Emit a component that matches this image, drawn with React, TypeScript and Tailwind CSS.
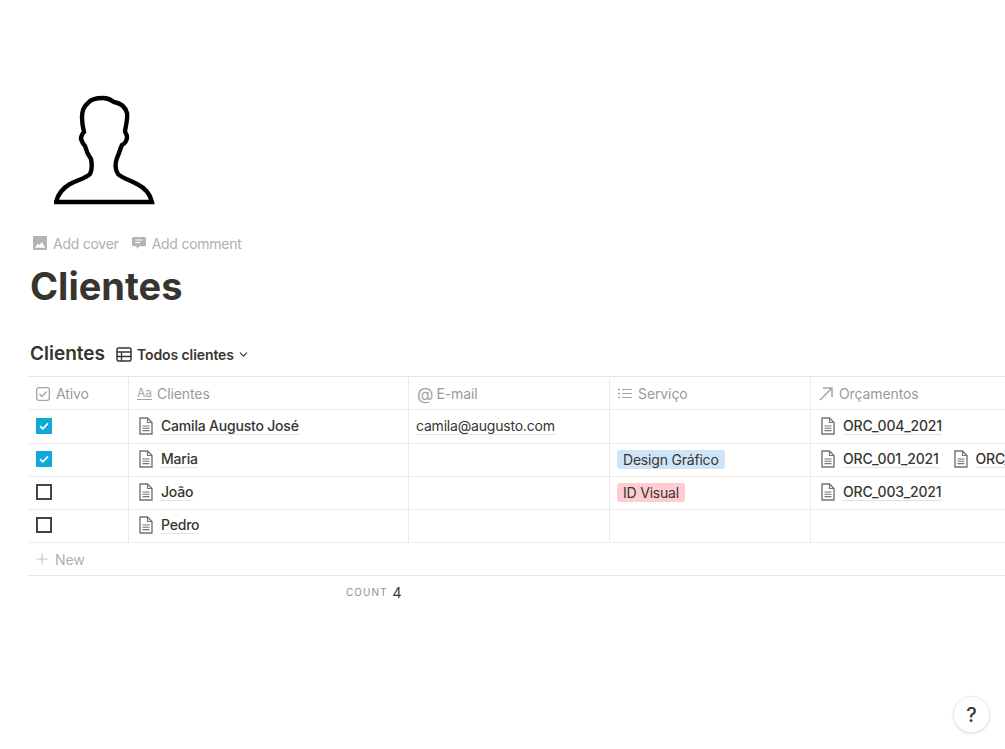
import { ChevronDown, Plus } from "lucide-react";

const font = { fontFamily: "Inter, 'Noto Sans', sans-serif" };

function DocIcon() {
  return (
    <svg width="14" height="18" viewBox="0 0 14 18" fill="none" className="shrink-0">
      <path d="M1 1h7.5L13 5.5V17H1z" stroke="#76756f" strokeWidth="1.400" />
      <path d="M8.500 1v4.500H13" stroke="#76756f" strokeWidth="1.200" />
      <path d="M3.500 9h7M3.500 11.300h7M3.500 13.600h7" stroke="#76756f" strokeWidth="1.100" />
    </svg>
  );
}

function Check({ on }: { on: boolean }) {
  if (on) {
    return (
      <div className="w-4 h-4 bg-[#0fa9d8] flex items-center justify-center">
        <svg width="12" height="12" viewBox="0 0 12 12" fill="none">
          <path d="M2 6.200l2.800 2.600L10 3.400" stroke="#fff" strokeWidth="1.700" />
        </svg>
      </div>
    );
  }
  return <div className="w-4 h-4 border-2 border-[#45443f]" />;
}

function PageLink({ text }: { text: string }) {
  return (
    <div className="flex items-center gap-[8px] shrink-0">
      <DocIcon />
      <span className="text-[14px] tracking-[-0.2px] font-medium text-[#37352f] border-b border-[#e4e3e1] leading-[17px]">{text}</span>
    </div>
  );
}

function Head({ w, icon, label, last }: { w: string; icon: React.ReactNode; label: string; last?: boolean }) {
  return (
    <div className={`${w} h-full flex items-center gap-[6px] pl-2 ${last ? "" : "border-r border-[#ebebea]"}`}>
      {icon}
      <span className="text-[14px] tracking-[-0.1px] text-[#9b9a97]">{label}</span>
    </div>
  );
}

const rows = [
  { on: true, name: "Camila Augusto José", email: "camila@augusto.com", tag: null, orc: ["ORC_004_2021"] },
  { on: true, name: "Maria", email: "", tag: { t: "Design Gráfico", c: "bg-[#cfe5f7]" }, orc: ["ORC_001_2021", "ORC_002_2021"] },
  { on: false, name: "João", email: "", tag: { t: "ID Visual", c: "bg-[#ffccd1]" }, orc: ["ORC_003_2021"] },
  { on: false, name: "Pedro", email: "", tag: null, orc: [] as string[] },
];

export default function App() {
  return (
    <div style={font} className="w-[1005px] h-[749px] bg-white overflow-hidden relative pt-[95px] pl-[28px]">
      {/* page icon */}
      <svg width="102" height="110" viewBox="54 95 102 110" fill="none" className="ml-[26px]">
        <path
          d="M56 202H152C150 193 145 188 137 184C130 180 122 178 118 174C115 170 115 163 117 158C119 154 120 149 122 145C125 144 127 140 127 137C127 134 125 133 125 131C126 125 128 118 127 113C125 106 120 103 114 102C110 99 107 98 103 98C97 98 91 99 88 103C83 107 82 112 82 117C82 123 83 128 84 132C82 134 81 136 81 139C82 142 83 144 85 146C86 150 88 155 91 159C92 164 92 170 90 174C86 178 78 180 70 184C63 188 58 194 56 202Z"
          stroke="#000"
          strokeWidth="4.400"
          strokeLinejoin="miter"
        />
      </svg>

      {/* page actions */}
      <div className="flex items-center gap-[13px] h-[20px] mt-[28px] ml-[5px] text-[14px] tracking-[-0.25px] text-[#b1b0ad]">
        <div className="flex items-center gap-[6px]">
          <svg width="14" height="14" viewBox="0 0 15 15">
            <path fillRule="evenodd" d="M1 0h13a1 1 0 011 1v13a1 1 0 01-1 1H1a1 1 0 01-1-1V1a1 1 0 011-1zM2 12.500h11L9.500 6.500 7 10 5.200 8z" fill="#b5b4b1" />
          </svg>
          <span>Add cover</span>
        </div>
        <div className="flex items-center gap-[6px]">
          <svg width="14" height="14" viewBox="0 0 15 15">
            <path d="M2 1h11a2 2 0 012 2v6a2 2 0 01-2 2H8l-3 3v-3H2a2 2 0 01-2-2V3a2 2 0 012-2z" fill="#b5b4b1" />
            <path d="M3.500 4.200h8M3.500 7h5.500" stroke="#fff" strokeWidth="1.100" />
          </svg>
          <span>Add comment</span>
        </div>
      </div>

      <h1 className="text-[38px] leading-[44px] font-bold text-[#37352f] mt-[11px] ml-[2px]">Clientes</h1>

      {/* collection title */}
      <div className="flex items-center h-[26px] mt-[33px] ml-[2px] text-[#37352f]">
        <span className="text-[19px] font-semibold pt-[1px]">Clientes</span>
        <svg width="16" height="15" viewBox="0 0 16 15" fill="none" className="ml-[11px]">
          <rect x="1" y="1" width="14" height="13" rx="1.500" stroke="#37352f" strokeWidth="1.500" />
          <path d="M1 5h14M1 9.500h14M5.500 5v9" stroke="#37352f" strokeWidth="1.300" />
        </svg>
        <span className="text-[14px] tracking-[-0.1px] font-semibold ml-[5px]">Todos clientes</span>
        <ChevronDown size={13} strokeWidth={2} className="ml-[3px]" />
      </div>

      {/* table */}
      <div className="mt-[9px] border-t border-[#e6e6e5] text-[#37352f]">
        <div className="flex h-[33px] items-center border-b border-[#ebebea] pt-[1px]">
          <Head
            w="w-[101px]"
            label="Ativo"
            icon={
              <svg width="14" height="14" viewBox="0 0 14 14" fill="none">
                <rect x=".7" y=".7" width="12.600" height="12.600" rx="2" stroke="#a5a4a1" strokeWidth="1.300" />
                <path d="M3.500 7l2.500 2.500 4.500-5" stroke="#a5a4a1" strokeWidth="1.300" />
              </svg>
            }
          />
          <Head
            w="w-[280px]"
            label="Clientes"
            icon={
              <span className="text-[12px] leading-[12px] -mr-[1px] text-[#a5a4a1] border-b border-[#a5a4a1]">Aa</span>
            }
          />
          <Head
            w="w-[201px]"
            label="E-mail"
            icon={<span className="text-[17px] leading-[16px] -mr-[3px] text-[#a5a4a1]">@</span>}
          />
          <Head
            w="w-[201px]"
            label="Serviço"
            icon={
              <svg width="14" height="11" viewBox="0 0 14 11" fill="none">
                <path d="M4 1.500h10M4 5.500h10M4 9.500h10" stroke="#a5a4a1" strokeWidth="1.200" />
                <path d="M0 1.500h2M0 5.500h2M0 9.500h2" stroke="#a5a4a1" strokeWidth="1.400" />
              </svg>
            }
          />
          <Head
            w="flex-1"
            label="Orçamentos"
            last
            icon={
              <svg width="14" height="14" viewBox="0 0 14 14" fill="none">
                <path d="M1 13L13 1M4 1h9v9" stroke="#a5a4a1" strokeWidth="1.500" />
              </svg>
            }
          />
        </div>

        {rows.map((r, i) => (
          <div
            key={r.name}
            className={`flex border-b border-[#ebebea] ${i === 0 ? "h-[34px] [&>div]:pb-[1px]" : "h-[33px] [&>div]:pb-[2px]"}`}
          >
            <div className="w-[101px] flex items-center pl-2 border-r border-[#ebebea]">
              <Check on={r.on} />
            </div>
            <div className="w-[280px] flex items-center pl-[10px] border-r border-[#ebebea]">
              <PageLink text={r.name} />
            </div>
            <div className="w-[201px] flex items-center pl-[7px] border-r border-[#ebebea]">
              {r.email && <span className="text-[14px] tracking-[-0.2px] border-b border-[#e4e3e1] leading-[17px]">{r.email}</span>}
            </div>
            <div className="w-[201px] flex items-center pl-[7px] border-r border-[#ebebea]">
              {r.tag && <span className={`${r.tag.c} rounded-[3px] px-[6px] text-[14px] tracking-[-0.2px] leading-[19px]`}>{r.tag.t}</span>}
            </div>
            <div className="flex-1 min-w-0 flex items-center gap-[15px] pl-[10px] overflow-hidden">
              {r.orc.map((o) => (
                <PageLink key={o} text={o} />
              ))}
            </div>
          </div>
        ))}

        <div className="flex items-center gap-[4px] h-[33px] pl-[5px] border-b border-[#e6e6e5] text-[14px] tracking-[-0.1px] text-[#b1b0ad]">
          <Plus size={18} strokeWidth={1} />
          <span>New</span>
        </div>

        <div className="flex items-center h-[33px] pl-[318px]">
          <span className="text-[10px] tracking-[1px] text-[#8f8e8b]">COUNT</span>
          <span className="text-[14px] ml-[5px]">4</span>
        </div>
      </div>

      {/* help */}
      <div className="absolute left-[953px] top-[696px] w-[37px] h-[37px] rounded-full bg-white border border-[#ebebea] shadow-sm flex items-center justify-center text-[20px] font-medium text-[#37352f]">
        ?
      </div>
    </div>
  );
}
